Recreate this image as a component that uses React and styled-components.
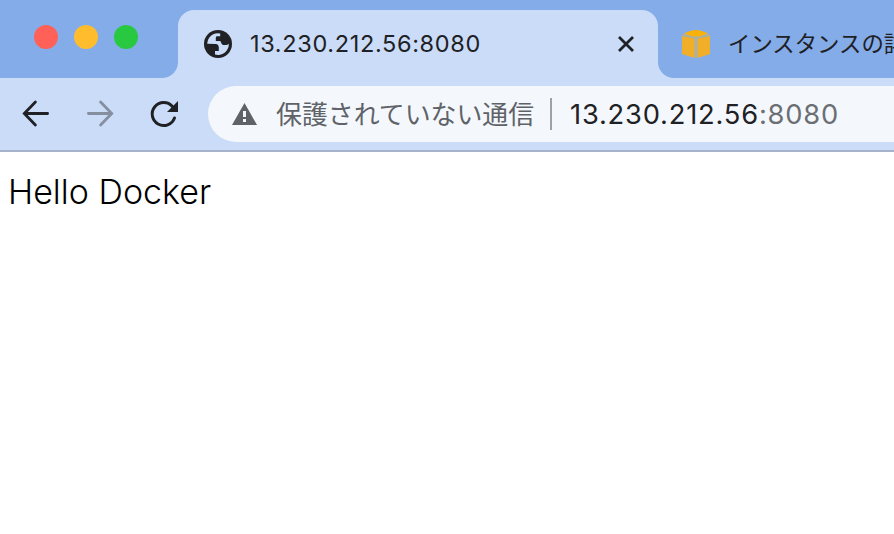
import React from 'react';
import styled, { createGlobalStyle } from 'styled-components';

const GlobalStyle = createGlobalStyle`
  * { box-sizing: border-box; }
  body { margin: 0; background: #fff; overflow: hidden; }
`;

const Browser = styled.div`
  width: 100%;
  height: 100vh;
  overflow: hidden;
  display: flex;
  flex-direction: column;
  background: #fff;
  font-family: Inter, "Noto Sans CJK JP", sans-serif;
  white-space: nowrap;
`;

const TabStrip = styled.header`
  height: 78px;
  flex: none;
  display: flex;
  align-items: flex-end;
  background: #84ace9;
`;

const WindowControls = styled.div`
  width: 178px;
  height: 78px;
  flex: none;
  display: flex;
  gap: 16px;
  padding: 25px 0 0 34px;
`;

const Light = styled.span`
  width: 24px;
  height: 24px;
  border-radius: 50%;
  background: ${(p) => p.$color};
`;

const ActiveTab = styled.div`
  position: relative;
  width: 480px;
  height: 68px;
  flex: none;
  display: flex;
  align-items: center;
  padding: 0 22px 0 26px;
  background: #cbdcf8;
  border-radius: 16px 16px 0 0;

  &::before,
  &::after {
    content: "";
    position: absolute;
    bottom: 0;
    width: 16px;
    height: 16px;
  }
  &::before {
    right: 100%;
    background: radial-gradient(circle at 0 0, transparent 15.5px, #cbdcf8 16.5px);
  }
  &::after {
    left: 100%;
    background: radial-gradient(circle at 100% 0, transparent 15.5px, #cbdcf8 16.5px);
  }
`;

const Tab = styled.div`
  height: 68px;
  flex: 1;
  min-width: 0;
  overflow: hidden;
  display: flex;
  align-items: center;
  padding-left: 24px;
`;

const TabTitle = styled.span`
  flex: 1;
  margin-left: 18px;
  font-size: ${(p) => p.$size};
  line-height: 32px;
  letter-spacing: ${(p) => p.$tracking || '0'};
  color: #202124;
`;

const Icon = styled.svg`
  display: block;
  flex: none;
`;

const Toolbar = styled.nav`
  height: 74px;
  flex: none;
  display: flex;
  align-items: center;
  padding-left: 20px;
  background: #cbdcf8;
  border-bottom: 2px solid #a5b2ca;
`;

const NavButtons = styled.div`
  width: 188px;
  flex: none;
  display: flex;
  gap: 32px;
`;

const AddressBar = styled.div`
  height: 56px;
  flex: 1;
  min-width: 0;
  overflow: hidden;
  display: flex;
  align-items: center;
  padding-left: 24px;
  border-radius: 28px 0 0 28px;
  background: #f4f8fd;
`;

const SecurityLabel = styled.span`
  width: 258px;
  flex: none;
  margin-left: 19px;
  padding-top: 2px;
  font-size: 25.9px;
  line-height: 36px;
  color: #5f6368;
`;

const Divider = styled.span`
  width: 2px;
  height: 32px;
  flex: none;
  margin: 0 18px 0 16px;
  background: #9da2a8;
`;

const Url = styled.span`
  padding-top: 2px;
  font-size: 27.3px;
  line-height: 36px;
  letter-spacing: 0.8px;
  color: #202124;
`;

const Port = styled.span`
  color: #6b6e73;
`;

const Page = styled.main`
  flex: 1;
  padding: 16px 8px;
  font-size: 34px;
  font-weight: 300;
  line-height: 48px;
  color: #000;
`;

const GlobeIcon = () => (
  <Icon width="28" height="28" viewBox="0 0 28 28">
    <circle cx="14" cy="14" r="14" fill="#202124" />
    <path
      d="M3.2 13.8A10.8 10.8 0 0 1 16.2 3.4V6.3H12.8Q11.8 6.5 11.8 8V11H15.7Q17 11.1 17.3 13.2L18.8 15H22.5Q24 14.8 24.8 13.8A10.8 10.8 0 0 1 11 24.5V21H14.8V17.5Q14.6 14.2 11.8 14Z"
      fill="#cbdcf8"
    />
  </Icon>
);

const CloseIcon = () => (
  <Icon width="20" height="20" viewBox="0 0 20 20">
    <path d="M3 3L17 17M17 3L3 17" stroke="#202124" strokeWidth="2.8" />
  </Icon>
);

const CubeIcon = () => (
  <Icon width="28" height="28" viewBox="0 0 28 28">
    <path d="M0 5L9 1L14 0L19 1L28 5V24L19 27L14 28L9 27L0 24Z" fill="#b9b18a" />
    <path d="M0 6V4.5L14 8.6L28 4.5V6L16 9H12Z" fill="#9aafb8" />
    <path d="M2 3.2L9 0.8L14 0L19 0.8L26 3.2L18 6.2H10Z" fill="#f9b10b" />
    <path d="M0 6L12 8.6V27.5L0 24ZM28 6L16 8.6V27.5L28 24Z" fill="#f0ae29" />
  </Icon>
);

const BackIcon = () => (
  <Icon width="32" height="32" viewBox="0 0 32 32">
    <path
      d="M27.6 15.5H5M15.4 4.1L4.3 15.5L15.4 26.9"
      fill="none"
      stroke="#202124"
      strokeWidth="2.8"
      strokeLinecap="round"
    />
  </Icon>
);

const ForwardIcon = () => (
  <Icon width="32" height="32" viewBox="0 0 32 32">
    <path
      d="M4.4 15.5H27M16.6 4.1L27.7 15.5L16.6 26.9"
      fill="none"
      stroke="#858f9f"
      strokeWidth="2.8"
      strokeLinecap="round"
    />
  </Icon>
);

const ReloadIcon = () => (
  <Icon width="32" height="32" viewBox="0 0 32 32">
    <path
      d="M26.5 20A11.5 11.5 0 1 1 24.4 8.5"
      fill="none"
      stroke="#202124"
      strokeWidth="3"
      strokeLinecap="round"
    />
    <path d="M30 3V14H19Z" fill="#202124" />
  </Icon>
);

const WarningIcon = () => (
  <Icon width="25" height="22" viewBox="0 0 25 22">
    <path d="M12.5 0L25 22H0Z" fill="#5f6368" />
    <path d="M11 8H14V14H11ZM11 16H14V19H11Z" fill="#f4f8fd" />
  </Icon>
);

export default function App() {
  return (
    <Browser>
      <GlobalStyle />
      <TabStrip>
        <WindowControls>
          <Light $color="#ff6057" />
          <Light $color="#ffbd2e" />
          <Light $color="#28c941" />
        </WindowControls>
        <ActiveTab>
          <GlobeIcon />
          <TabTitle $size="23.5px" $tracking="0.65px">13.230.212.56:8080</TabTitle>
          <CloseIcon />
        </ActiveTab>
        <Tab>
          <CubeIcon />
          <TabTitle $size="22.4px">インスタンスの詳</TabTitle>
        </Tab>
      </TabStrip>
      <Toolbar>
        <NavButtons>
          <BackIcon />
          <ForwardIcon />
          <ReloadIcon />
        </NavButtons>
        <AddressBar>
          <WarningIcon />
          <SecurityLabel>保護されていない通信</SecurityLabel>
          <Divider />
          <Url>
            13.230.212.56<Port>:8080</Port>
          </Url>
        </AddressBar>
      </Toolbar>
      <Page>Hello Docker</Page>
    </Browser>
  );
}
